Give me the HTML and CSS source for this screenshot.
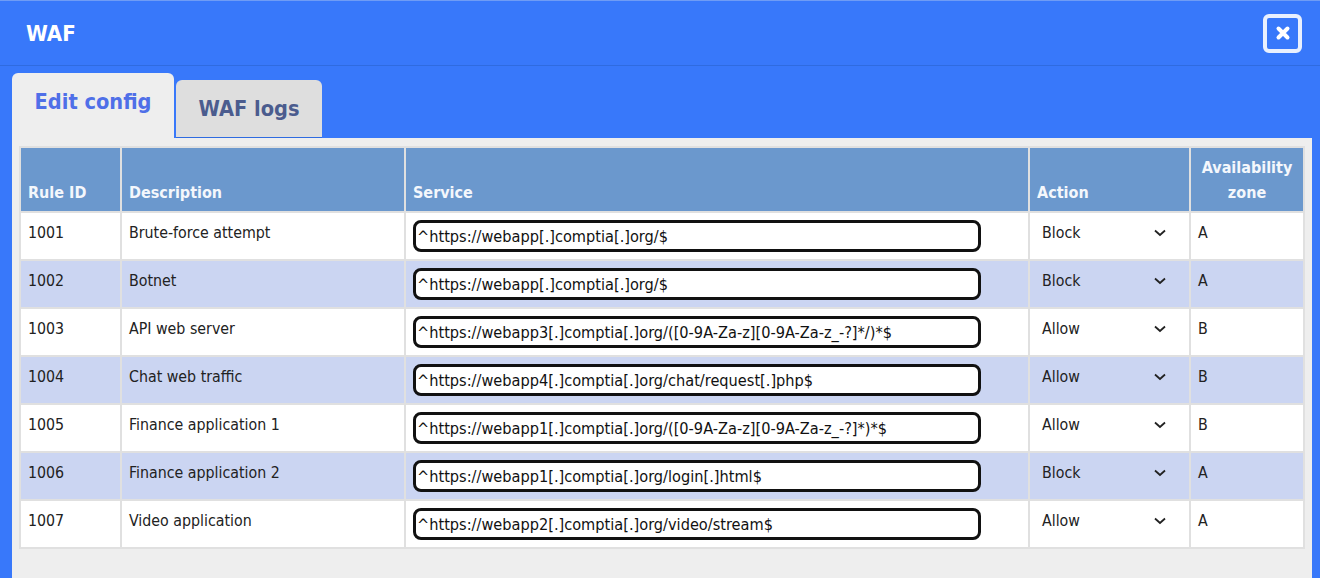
FILE: index.html
```html
<!DOCTYPE html>
<html lang="en">
<head>
  <meta charset="UTF-8" />
  <title>WAF</title>
  <link rel="stylesheet" href="styles.css">
</head>
<body>

  <div class="header">
    <div class="title">WAF</div>
    <div class="close">
      <svg width="16" height="16" viewBox="0 0 16 16"><path d="M3.5 3.5 L12.5 12.5 M12.5 3.5 L3.5 12.5" stroke="#fff" stroke-width="4" stroke-linecap="round"/></svg>
    </div>
  </div>

  <div class="tabs">
    <div class="tab active">Edit config</div>
    <div class="tab">WAF logs</div>
  </div>

  <div class="panel">
    <table class="rules">
      <colgroup>
        <col class="col-id"><col class="col-desc"><col class="col-service"><col class="col-action"><col class="col-zone">
      </colgroup>
      <thead>
        <tr>
          <th>Rule ID</th>
          <th>Description</th>
          <th>Service</th>
          <th>Action</th>
          <th class="center">Availability zone</th>
        </tr>
      </thead>
      <tbody>
        <tr>
          <td>1001</td><td>Brute-force attempt</td>
          <td><div class="field">^https://webapp[.]comptia[.]org/$</div></td>
          <td><div class="select">Block<svg class="chevron" width="12" height="8" viewBox="0 0 12 8"><path d="M1 1.5 L6 6 L11 1.5" fill="none" stroke="#222" stroke-width="1.8"/></svg></div></td>
          <td>A</td>
        </tr>
        <tr>
          <td>1002</td><td>Botnet</td>
          <td><div class="field">^https://webapp[.]comptia[.]org/$</div></td>
          <td><div class="select">Block<svg class="chevron" width="12" height="8" viewBox="0 0 12 8"><path d="M1 1.5 L6 6 L11 1.5" fill="none" stroke="#222" stroke-width="1.8"/></svg></div></td>
          <td>A</td>
        </tr>
        <tr>
          <td>1003</td><td>API web server</td>
          <td><div class="field">^https://webapp3[.]comptia[.]org/([0-9A-Za-z][0-9A-Za-z_-?]*/)*$</div></td>
          <td><div class="select">Allow<svg class="chevron" width="12" height="8" viewBox="0 0 12 8"><path d="M1 1.5 L6 6 L11 1.5" fill="none" stroke="#222" stroke-width="1.8"/></svg></div></td>
          <td>B</td>
        </tr>
        <tr>
          <td>1004</td><td>Chat web traffic</td>
          <td><div class="field">^https://webapp4[.]comptia[.]org/chat/request[.]php$</div></td>
          <td><div class="select">Allow<svg class="chevron" width="12" height="8" viewBox="0 0 12 8"><path d="M1 1.5 L6 6 L11 1.5" fill="none" stroke="#222" stroke-width="1.8"/></svg></div></td>
          <td>B</td>
        </tr>
        <tr>
          <td>1005</td><td>Finance application 1</td>
          <td><div class="field">^https://webapp1[.]comptia[.]org/([0-9A-Za-z][0-9A-Za-z_-?]*)*$</div></td>
          <td><div class="select">Allow<svg class="chevron" width="12" height="8" viewBox="0 0 12 8"><path d="M1 1.5 L6 6 L11 1.5" fill="none" stroke="#222" stroke-width="1.8"/></svg></div></td>
          <td>B</td>
        </tr>
        <tr>
          <td>1006</td><td>Finance application 2</td>
          <td><div class="field">^https://webapp1[.]comptia[.]org/login[.]html$</div></td>
          <td><div class="select">Block<svg class="chevron" width="12" height="8" viewBox="0 0 12 8"><path d="M1 1.5 L6 6 L11 1.5" fill="none" stroke="#222" stroke-width="1.8"/></svg></div></td>
          <td>A</td>
        </tr>
        <tr>
          <td>1007</td><td>Video application</td>
          <td><div class="field">^https://webapp2[.]comptia[.]org/video/stream$</div></td>
          <td><div class="select">Allow<svg class="chevron" width="12" height="8" viewBox="0 0 12 8"><path d="M1 1.5 L6 6 L11 1.5" fill="none" stroke="#222" stroke-width="1.8"/></svg></div></td>
          <td>A</td>
        </tr>
      </tbody>
    </table>
  </div>

</body>
</html>
```

FILE: styles.css
```css
html, body {
  height: 100%;
}
body {
  font-family: "DejaVu Sans Condensed", "DejaVu Sans", sans-serif;
  background-color: #3878fa;
  margin: 0;
  overflow: hidden;
  box-sizing: border-box;
  border-top: 1px solid #6f9cf5;
}
.header {
  display: flex;
  justify-content: space-between;
  align-items: center;
  height: 64px;
  padding: 0 18px 0 26px;
  border-bottom: 1px solid #2f6be0;
}
.title {
  color: white;
  font-size: 22px;
  font-weight: 700;
}
.close {
  display: flex;
  align-items: center;
  justify-content: center;
  box-sizing: border-box;
  width: 39px;
  height: 39px;
  border: 4px solid #e9f0fe;
  border-radius: 6px;
}
.tabs {
  display: flex;
  align-items: flex-end;
  gap: 2px;
  margin: 7px 0 0 12px;
}
.tab {
  box-sizing: border-box;
  width: 146px;
  height: 58px;
  padding-top: 16px;
  text-align: center;
  font-size: 21.6px;
  font-weight: 700;
  color: #4b5c8e;
  background-color: #dedede;
  border-radius: 6px 6px 0 0;
  border-bottom: 1px solid #2f6be0;
}
.tab.active {
  width: 162px;
  height: 65px;
  color: #4f6fe8;
  background-color: #eeeeee;
  border-bottom: none;
}
.panel {
  margin: 0 8px 0 12px;
  height: 440px;
  padding: 8px 7px 0 7px;
  background-color: #eeeeee;
}
.rules {
  width: 1286px;
  table-layout: fixed;
  border-collapse: separate;
  border-spacing: 2px;
  background-color: #e0e0e0;
  font-size: 15.8px;
  color: #222;
}
.col-id { width: 99px; }
.col-desc { width: 282px; }
.col-service { width: 622px; }
.col-action { width: 159px; }
.rules th {
  height: 63px;
  box-sizing: border-box;
  padding: 6px 7px;
  vertical-align: bottom;
  text-align: left;
  font-size: 16px;
  line-height: 25px;
  font-weight: 700;
  color: #f4f7fc;
  background-color: #6b98cd;
}
.rules th.center {
  text-align: center;
}
.rules td {
  height: 46px;
  box-sizing: border-box;
  padding: 8.5px 7px;
  vertical-align: top;
  line-height: 22px;
  background-color: white;
}
.rules tbody tr:nth-child(even) td {
  background-color: #cbd5f2;
}
.rules td:nth-child(3) {
  padding: 7px 8px 0 7px;
}
.field {
  box-sizing: border-box;
  width: 568px;
  height: 32px;
  padding: 2px 1px;
  font-size: 16.2px;
  line-height: 24px;
  color: #111;
  white-space: nowrap;
  background-color: white;
  border: 3px solid #111;
  border-radius: 8px;
}
.select {
  display: flex;
  justify-content: space-between;
  align-items: center;
  padding: 0 16px 0 5px;
}
```
